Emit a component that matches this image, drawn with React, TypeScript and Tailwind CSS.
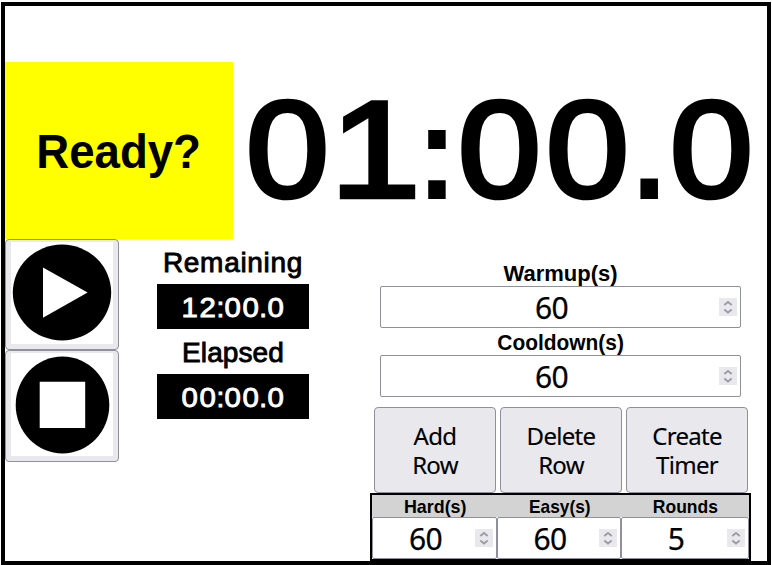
import type { ReactNode } from "react";

const sans = "font-['Liberation_Sans',Arial,sans-serif]";
const ui = "font-['Noto_Sans','DejaVu_Sans',sans-serif]";

function Spinner() {
  return (
    <span className="flex size-[18px] shrink-0 items-center justify-center bg-[#e9e8ed]">
      <svg width="18" height="18" viewBox="0 0 18 18" fill="none" stroke="#9c9ba6" strokeWidth="1.9">
        <path d="M5.3 6.9 9 4l3.7 2.9M5.3 11.6 9 14.5l3.7-2.9" />
      </svg>
    </span>
  );
}

function NumberField({ value, className }: { value: string; className: string }) {
  return (
    <div className={"flex h-[42px] items-center rounded-[2px] border border-[#8f8f9d] bg-white " + className}>
      <span className={"flex-1 pt-[2px] pl-[3px] text-center text-[30px] leading-[38px] tracking-[-0.7px] [-webkit-text-stroke:0.25px_black] " + ui}>{value}</span>
      <Spinner />
    </div>
  );
}

function ActionButton({ top, bottom }: { top: string; bottom: string }) {
  return (
    <button className={"h-[86px] w-[122px] rounded-[4px] border border-[#8f8f9d] bg-[#e9e8ed] pb-px text-center text-[24px] leading-[29px] tracking-[-0.7px] [-webkit-text-stroke:0.15px_black] " + ui}>
      {top}
      <br />
      {bottom}
    </button>
  );
}

function IconButton({ label, className, children }: { label: string; className: string; children: ReactNode }) {
  return (
    <button aria-label={label} className={"flex w-[114px] justify-center rounded-[4px] border border-[#8f8f9d] bg-[#e9e8ed] " + className}>
      {children}
    </button>
  );
}

function Label({ children, className }: { children: ReactNode; className: string }) {
  return (
    <div className={"flex justify-center whitespace-nowrap " + sans}>
      <span className={"block " + className}>{children}</span>
    </div>
  );
}

function ClockText({ text }: { text: string }) {
  return (
    <div className={"flex h-[45px] w-[152px] items-center justify-center bg-black pt-[2px] text-[28px] leading-[43px] text-white [-webkit-text-stroke:0.9px_white] " + sans}>
      {text.split("").map((c, i) => (
        <span key={i} className={c === ":" || c === "." ? "flex w-[8px] justify-center" : "flex w-[17.4px] justify-center"}>
          <span className={c === ":" || c === "." ? "" : "scale-x-105"}>{c}</span>
        </span>
      ))}
    </div>
  );
}

function bigGlyph(c: string) {
  if (c === ":" || c === ".") return "scale-x-90 pt-[2px] font-bold";
  if (c === "1") return "scale-x-118 [-webkit-text-stroke:4.4px_black]";
  return "scale-x-108 [-webkit-text-stroke:4.6px_black]";
}

export default function App() {
  return (
    <div className="h-[565px] w-[772px] overflow-hidden bg-white pt-[2px] pl-px text-black">
      <main className="h-[563px] w-[770px] border-4 border-black pt-[56px]">
        <section className="flex h-[177px]">
          <div className={"flex w-[228px] items-center justify-center bg-[#ffff00] text-[48.5px] font-bold " + sans}>
            <span className="scale-x-94 pt-[2px]">Ready?</span>
          </div>
          <div className={"flex pl-[10px] text-[138px] leading-[174px] " + sans}>
            {"01:00.0".split("").map((c, i) => (
              <span key={i} className={c === ":" || c === "." ? "flex w-[36px] justify-center" : "flex w-[88px] justify-center"}>
                <span className={bigGlyph(c)}>{c}</span>
              </span>
            ))}
          </div>
        </section>

        <section className="flex h-[322px]">
          <div className="flex w-[114px] flex-col">
            <IconButton label="Start" className="h-[111px] pt-[2px]">
              <svg width="102" height="102" viewBox="0 0 102 102">
                <path fill="white" d="M0 0h102v102H0z" />
                <ellipse cx="51" cy="50.5" rx="49.2" ry="48" />
                <path fill="white" d="M32 25.5v50.2l44.6-25.1z" />
              </svg>
            </IconButton>
            <IconButton label="Stop" className="h-[112px] pt-[2px]">
              <svg width="102" height="103" viewBox="0 0 102 103">
                <path fill="white" d="M0 0h102v103H0z" />
                <ellipse cx="51.5" cy="52" rx="46.8" ry="48.4" />
                <path fill="white" d="M28.7 28.7h45.5v46.3H28.7z" />
              </svg>
            </IconButton>
          </div>

          <div className="ml-[38px] w-[152px]">
            <Label className="h-[45px] text-[28px] leading-[48px] tracking-[0.7px] [-webkit-text-stroke:0.9px_black]">Remaining</Label>
            <ClockText text="12:00.0" />
            <Label className="h-[45px] text-[28px] leading-[48px] tracking-[0.1px] [-webkit-text-stroke:0.9px_black]">Elapsed</Label>
            <ClockText text="00:00.0" />
          </div>

          <div className="ml-[61px] w-[381px] pt-[20px]">
            <Label className="h-[27px] text-[22px] leading-[29px] font-bold">Warmup(s)</Label>
            <NumberField value="60" className="ml-[10px] w-[361px] pr-[3px]" />
            <Label className="h-[27px] scale-x-95 text-[22px] leading-[29px] font-bold">Cooldown(s)</Label>
            <NumberField value="60" className="ml-[10px] w-[361px] pr-[3px]" />
            <div className="mt-[10px] flex gap-[4px] pl-[4px]">
              <ActionButton top="Add" bottom="Row" />
              <ActionButton top="Delete" bottom="Row" />
              <ActionButton top="Create" bottom="Timer" />
            </div>
            <div className="h-[68px] border-2 border-black">
              <div className="grid h-[22px] grid-cols-[125px_124px_128px] bg-[#d3d3d3]">
                <Label className="scale-x-94 pl-[2px] text-[19px] leading-[23px] font-bold">Hard(s)</Label>
                <Label className="scale-x-91 pl-px text-[19px] leading-[23px] font-bold">Easy(s)</Label>
                <Label className="scale-x-92 text-[19px] leading-[23px] font-bold">Rounds</Label>
              </div>
              <div className="grid grid-cols-[125px_124px_128px]">
                <NumberField value="60" className="pr-[3px]" />
                <NumberField value="60" className="pr-[3px]" />
                <NumberField value="5" className="pr-[3px]" />
              </div>
            </div>
          </div>
        </section>
      </main>
    </div>
  );
}
